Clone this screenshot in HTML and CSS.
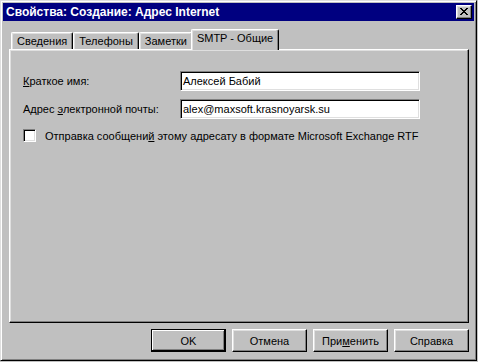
FILE: index.html
```html
<!DOCTYPE html>
<html lang="ru">
<head>
<meta charset="utf-8">
<title>Свойства: Создание: Адрес Internet</title>
<link rel="stylesheet" href="styles.css">
</head>
<body>
<div class="window">
  <div class="titlebar">
    <span class="title">Свойства: Создание: Адрес Internet</span>
    <span class="close-btn">
      <svg width="8" height="7" viewBox="0 0 8 7" shape-rendering="crispEdges">
        <rect x="0" y="0" width="2" height="1" fill="#000"/>
        <rect x="6" y="0" width="2" height="1" fill="#000"/>
        <rect x="1" y="1" width="2" height="1" fill="#000"/>
        <rect x="5" y="1" width="2" height="1" fill="#000"/>
        <rect x="2" y="2" width="4" height="1" fill="#000"/>
        <rect x="3" y="3" width="2" height="1" fill="#000"/>
        <rect x="2" y="4" width="4" height="1" fill="#000"/>
        <rect x="1" y="5" width="2" height="1" fill="#000"/>
        <rect x="5" y="5" width="2" height="1" fill="#000"/>
        <rect x="0" y="6" width="2" height="1" fill="#000"/>
        <rect x="6" y="6" width="2" height="1" fill="#000"/>
      </svg>
    </span>
  </div>
  <div class="content">
    <div class="tabs">
      <div class="tab">Сведения</div>
      <div class="tab">Телефоны</div>
      <div class="tab">Заметки</div>
      <div class="tab active">SMTP - Общие</div>
    </div>
    <div class="panel">
      <div class="form">
        <div class="label"><u>К</u>раткое имя:</div>
        <div class="field">Алексей Бабий</div>
        <div class="label">Адрес <u>э</u>лектронной почты:</div>
        <div class="field">alex@maxsoft.krasnoyarsk.su</div>
      </div>
      <div class="check">
        <span class="box"></span>
        <span class="check-text">Отправка сообщени<u>й</u> этому адресату в формате Microsoft Exchange RTF</span>
      </div>
    </div>
    <div class="buttons">
      <div class="btn default">OK</div>
      <div class="btn">Отмена</div>
      <div class="btn">При<u>м</u>енить</div>
      <div class="btn">Справка</div>
    </div>
  </div>
</div>
</body>
</html>
```

FILE: styles.css
```css
html, body {
  margin: 0;
  padding: 0;
  background: #c0c0c0;
}

body {
  font-family: "Liberation Sans", Arial, sans-serif;
  font-size: 11px;
  color: #000;
}

u {
  text-decoration: underline;
  text-underline-offset: 1px;
}

.window {
  box-sizing: border-box;
  width: 477px;
  height: 361px;
  border: 1px solid;
  border-color: #dfdfdf #000 #000 #dfdfdf;
  box-shadow: inset 1px 1px #fff, inset -1px -1px #808080;
  padding: 2px;
  display: flex;
  flex-direction: column;
}

.titlebar {
  height: 18px;
  background: #000080;
  color: #fff;
  display: flex;
  align-items: center;
  justify-content: space-between;
  padding: 0 2px 0 3px;
}

.title {
  font-weight: bold;
  font-size: 12px;
  white-space: nowrap;
}

.close-btn {
  box-sizing: border-box;
  width: 16px;
  height: 14px;
  background: #c0c0c0;
  border: 1px solid;
  border-color: #fff #000 #000 #fff;
  box-shadow: inset -1px -1px #808080, inset 1px 1px #dfdfdf;
  display: flex;
  align-items: center;
  justify-content: center;
  padding: 0 1px 1px 0;
}

.close-btn svg {
  display: block;
}

.content {
  flex: 1;
  display: flex;
  flex-direction: column;
  padding: 8px 5px 0 6px;
}

.tabs {
  display: flex;
  align-items: flex-end;
  height: 20px;
  padding-left: 2px;
  position: relative;
  z-index: 1;
}

.tab {
  box-sizing: border-box;
  height: 17px;
  padding: 0 5px 1px 5px;
  display: flex;
  align-items: center;
  background: #c0c0c0;
  border-top: 1px solid #fff;
  border-left: 1px solid #fff;
  border-right: 1px solid #000;
  border-radius: 2px 2px 0 0;
  box-shadow: inset -1px 0 #808080, inset 1px 1px #dfdfdf;
  white-space: nowrap;
}

.tab.active {
  height: 21px;
  margin: 0 -2px -1px -2px;
  padding: 0 5px 4px 5px;
  position: relative;
  z-index: 2;
}

.panel {
  box-sizing: border-box;
  height: 274px;
  border: 1px solid;
  border-color: #fff #000 #000 #fff;
  box-shadow: inset -1px -1px #808080, inset 1px 1px #dfdfdf;
  padding: 21px 13px 0 13px;
}

.form {
  display: grid;
  grid-template-columns: 157px 240px;
  row-gap: 8px;
  align-items: center;
}

.field {
  box-sizing: border-box;
  height: 20px;
  background: #fff;
  border: 1px solid;
  border-color: #808080 #fff #fff #808080;
  box-shadow: inset 1px 1px #000, inset -1px -1px #dfdfdf;
  padding: 0 2px 0 2px;
  display: flex;
  align-items: center;
  white-space: nowrap;
}

.check {
  display: flex;
  align-items: center;
  margin-top: 10px;
  gap: 9px;
}

.box {
  box-sizing: border-box;
  width: 13px;
  height: 13px;
  background: #fff;
  border: 1px solid;
  border-color: #808080 #fff #fff #808080;
  box-shadow: inset 1px 1px #000, inset -1px -1px #dfdfdf;
  flex: none;
}

.buttons {
  display: flex;
  justify-content: flex-end;
  gap: 6px;
  margin-top: 6px;
}

.btn {
  box-sizing: border-box;
  width: 75px;
  height: 23px;
  border: 1px solid;
  border-color: #fff #000 #000 #fff;
  box-shadow: inset -1px -1px #808080, inset 1px 1px #dfdfdf;
  display: flex;
  align-items: center;
  justify-content: center;
  white-space: nowrap;
}

.btn.default {
  border-color: #000;
  box-shadow: inset -1px -1px #000, inset 1px 1px #fff, inset -2px -2px #808080;
}
```
